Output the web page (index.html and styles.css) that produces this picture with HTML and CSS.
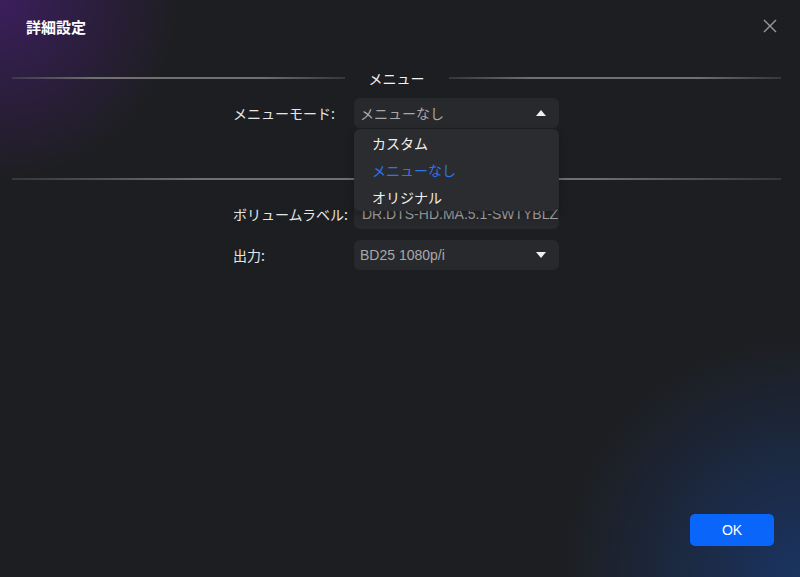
FILE: index.html
```html
<!DOCTYPE html>
<html lang="ja">
  <head>
    <meta charset="UTF-8" />
    <title>詳細設定</title>
    <link rel="stylesheet" href="styles.css">
  </head>
  <body>
    <!-- Advanced settings dialog -->
    <div class="dialog">
      <div class="header">
        <span class="title">詳細設定</span>
        <span class="close">
          <svg width="14" height="14" viewBox="0 0 14 14">
            <path d="M1 1L13 13M13 1L1 13" stroke="#9a9a9c" stroke-width="1.4" fill="none" />
          </svg>
        </span>
      </div>

      <div class="content">
        <!-- Menu section -->
        <div class="divider">
          <span class="line"></span>
          <span class="divider-text">メニュー</span>
          <span class="line"></span>
        </div>

        <div class="form">
          <label class="label">メニューモード:</label>
          <div class="select-wrap">
            <div class="select open">
              <span class="value">メニューなし</span>
              <svg class="arrow" width="10" height="6" viewBox="0 0 10 6">
                <path d="M0 6L5 0L10 6Z" fill="#f0f0f0" />
              </svg>
            </div>
            <div class="popup">
              <div class="option">カスタム</div>
              <div class="option selected">メニューなし</div>
              <div class="option">オリジナル</div>
            </div>
          </div>
        </div>

        <div class="divider plain">
          <span class="line"></span>
        </div>

        <div class="form">
          <label class="label">ボリュームラベル:</label>
          <div class="field">
            <span class="value latin">DR.DTS-HD.MA.5.1-SWTYBLZ</span>
          </div>

          <label class="label">出力:</label>
          <div class="select">
            <span class="value latin">BD25 1080p/i</span>
            <svg class="arrow" width="10" height="6" viewBox="0 0 10 6">
              <path d="M0 0L10 0L5 6Z" fill="#f0f0f0" />
            </svg>
          </div>
        </div>
      </div>

      <div class="footer">
        <button class="ok-btn">OK</button>
      </div>
    </div>
  </body>
</html>
```

FILE: styles.css
```css
body {
  margin: 0;
  padding: 0;
  background-color: #1d1e21;
  font-family: "Liberation Sans", "Noto Sans CJK JP", sans-serif;
}

/* Dialog */
.dialog {
  width: 800px;
  height: 577px;
  display: flex;
  flex-direction: column;
  background:
    radial-gradient(circle at 0 0, rgba(76, 30, 124, 0.65), rgba(76, 30, 124, 0) 180px),
    radial-gradient(circle at 100% 100%, rgba(24, 66, 140, 0.6), rgba(24, 66, 140, 0) 240px),
    #1d1e21;
  color: #e8e8e8;
  overflow: hidden;
}

.header {
  height: 52px;
  display: flex;
  align-items: center;
  justify-content: space-between;
  padding: 0 23px 0 26px;
}

.title {
  font-family: "Noto Sans CJK JP", sans-serif;
  font-size: 15px;
  font-weight: bold;
  color: #ffffff;
}

.close {
  display: flex;
}

.content {
  flex: 1;
  padding-top: 16px;
}

/* Section divider */
.divider {
  height: 20px;
  margin: 0 19px 0 12px;
  display: flex;
  align-items: center;
}

.divider.plain {
  margin-top: 41px;
}

.line {
  flex: 1;
  height: 2px;
  background: linear-gradient(90deg, rgba(110, 110, 112, 0.3), #707072 25%, #707072 75%, rgba(110, 110, 112, 0.3));
}

.divider-text {
  padding: 0 24px;
  font-family: "Noto Sans CJK JP", sans-serif;
  font-size: 14px;
  color: #f2f2f2;
}

/* Form rows */
.form {
  margin: 10px 0 0 233px;
  display: grid;
  grid-template-columns: 121px 205px;
  row-gap: 11px;
  align-items: center;
}

.label {
  font-family: "Noto Sans CJK JP", sans-serif;
  font-size: 14px;
  color: #e6e6e6;
  white-space: nowrap;
}

.select-wrap {
  position: relative;
}

.select,
.field {
  height: 30px;
  box-sizing: border-box;
  padding: 0 13px 0 6px;
  display: flex;
  align-items: center;
  justify-content: space-between;
  background-color: #28292c;
  border-radius: 6px;
  overflow: hidden;
}

.value {
  font-family: "Noto Sans CJK JP", sans-serif;
  font-size: 14px;
  color: #a8a8aa;
  white-space: nowrap;
}

.value.latin {
  font-family: "Liberation Sans", sans-serif;
  font-size: 14px;
}

.field .value {
  padding-left: 2px;
}

/* Open dropdown list */
.popup {
  position: absolute;
  top: 31px;
  left: 0;
  width: 205px;
  padding: 1px 0 0;
  background-color: #2b2c2f;
  border-radius: 6px;
  box-shadow: 0 4px 10px rgba(0, 0, 0, 0.3);
  z-index: 2;
}

.option {
  height: 27px;
  line-height: 27px;
  padding-left: 18px;
  font-family: "Noto Sans CJK JP", sans-serif;
  font-size: 14px;
  color: #f0f0f0;
}

.option.selected {
  color: #2f74e8;
}

/* Footer */
.footer {
  display: flex;
  justify-content: flex-end;
  padding: 0 26px 31px 0;
}

.ok-btn {
  width: 84px;
  height: 32px;
  border: none;
  border-radius: 5px;
  background-color: #0a66fb;
  color: #ffffff;
  font-family: "Liberation Sans", sans-serif;
  font-size: 14px;
  cursor: pointer;
}
```
